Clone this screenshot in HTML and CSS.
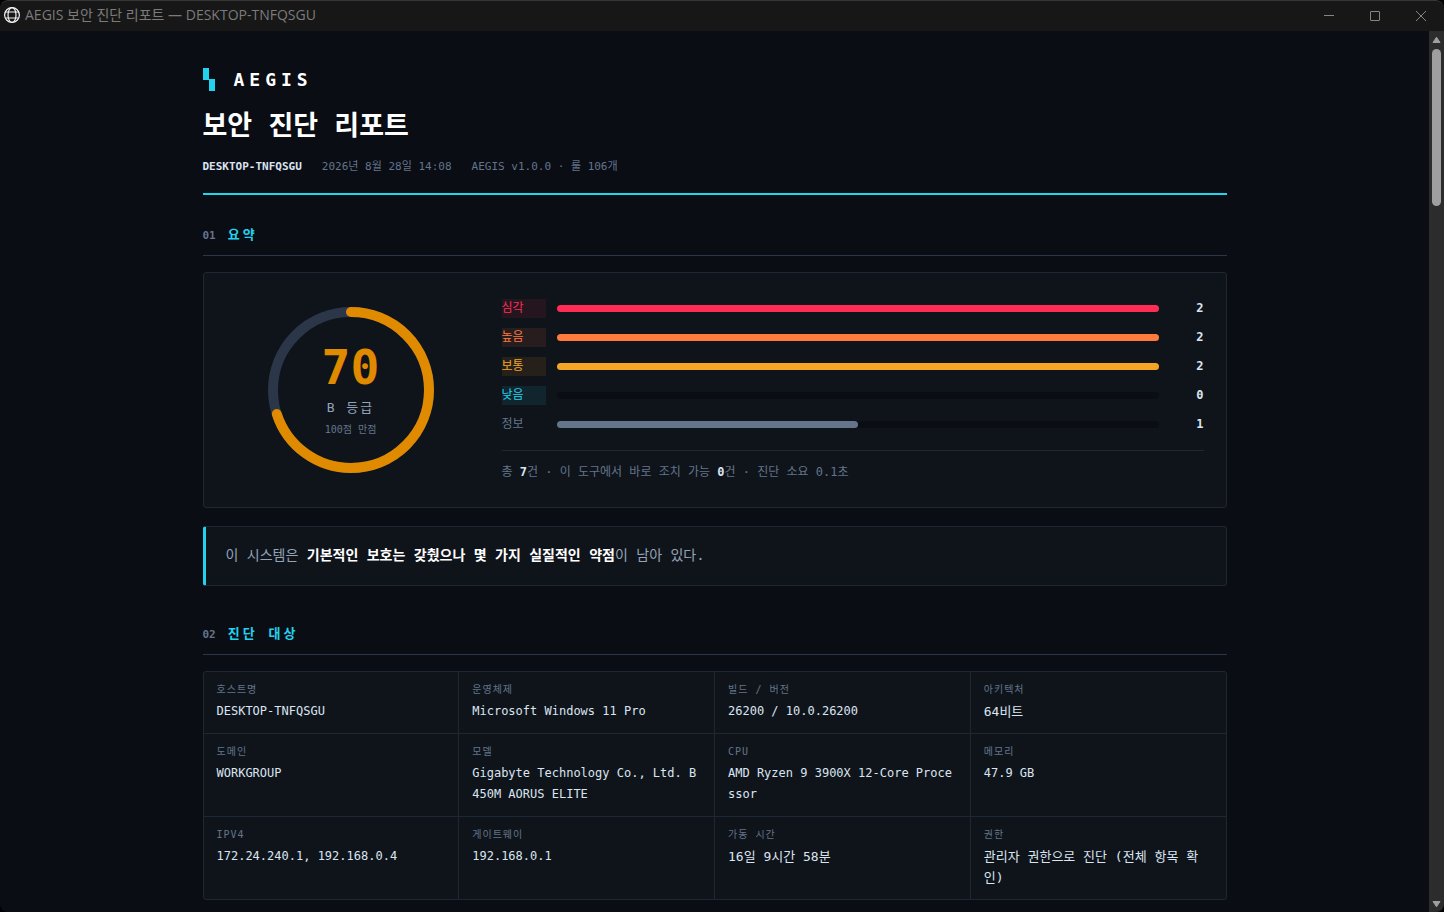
FILE: index.html
```html
<!DOCTYPE html>
<html lang="ko">
<head>
  <meta charset="UTF-8">
  <title>AEGIS 보안 진단 리포트 — DESKTOP-TNFQSGU</title>
  <link rel="stylesheet" href="styles.css">
</head>
<body>

  <div class="window">
    <div class="titlebar">
      <svg class="globe" width="18" height="18" viewBox="0 0 18 18" fill="none" stroke="#f2f2f2" stroke-width="1.2">
        <circle cx="9" cy="9" r="7.4"/>
        <ellipse cx="9" cy="9" rx="4" ry="7.4"/>
        <path d="M2.4 6h13.2M2.4 12h13.2" stroke-width="1.1"/>
      </svg>
      <span class="titlebar-text">AEGIS 보안 진단 리포트 — DESKTOP-TNFQSGU</span>
      <button class="win-btn" aria-label="최소화"><svg width="10" height="10" viewBox="0 0 10 10"><path d="M0 4.5h10"/></svg></button>
      <button class="win-btn" aria-label="최대화"><svg width="10" height="10" viewBox="0 0 10 10"><rect x="0.5" y="0.5" width="9" height="9" rx="0.5"/></svg></button>
      <button class="win-btn" aria-label="닫기"><svg width="10" height="10" viewBox="0 0 10 10"><path d="M0 0l10 10M10 0L0 10"/></svg></button>
    </div>

    <div class="view">
      <main class="page">
        <header class="head">
          <div class="brand">
            <svg width="12" height="24" viewBox="0 0 12 24"><path d="M0 0h6v11h6v12H6V12H0z" fill="#22d3ee"/></svg>
            <span>AEGIS</span>
          </div>
          <h1>보안 진단 리포트</h1>
          <div class="meta">
            <b>DESKTOP-TNFQSGU</b>
            <span>2026년 8월 28일 14:08</span>
            <span>AEGIS v1.0.0 · 룰 106개</span>
          </div>
        </header>

        <section>
          <h2><span class="num">01</span>요약</h2>
          <div class="card summary">
            <div class="gauge">
              <svg width="190" height="190" viewBox="0 0 190 190" fill="none" stroke-width="10">
                <circle cx="95" cy="95" r="78" stroke="#2b3648"/>
                <circle cx="95" cy="95" r="78" stroke="#e08a00" stroke-linecap="round" pathLength="100" stroke-dasharray="70 100" transform="rotate(-90 95 95)"/>
              </svg>
              <div class="gauge-text">
                <div class="score">70</div>
                <div class="grade">B 등급</div>
                <div class="max">100점 만점</div>
              </div>
            </div>
            <div class="levels">
              <div class="level crit"><span class="tag">심각</span><div class="track"><div class="fill" style="width: 100%"></div></div><span class="count">2</span></div>
              <div class="level high"><span class="tag">높음</span><div class="track"><div class="fill" style="width: 100%"></div></div><span class="count">2</span></div>
              <div class="level mid"><span class="tag">보통</span><div class="track"><div class="fill" style="width: 100%"></div></div><span class="count">2</span></div>
              <div class="level low"><span class="tag">낮음</span><div class="track"><div class="fill" style="width: 0%"></div></div><span class="count">0</span></div>
              <div class="level info"><span class="tag">정보</span><div class="track"><div class="fill" style="width: 50%"></div></div><span class="count">1</span></div>
              <p class="total">총 <b>7</b>건 · 이 도구에서 바로 조치 가능 <b>0</b>건 · 진단 소요 0.1초</p>
            </div>
          </div>
          <p class="card verdict">이 시스템은 <b>기본적인 보호는 갖췄으나 몇 가지 실질적인 약점</b>이 남아 있다.</p>
        </section>

        <section>
          <h2><span class="num">02</span>진단 대상</h2>
          <dl class="facts">
            <div><dt>호스트명</dt><dd>DESKTOP-TNFQSGU</dd></div>
            <div><dt>운영체제</dt><dd>Microsoft Windows 11 Pro</dd></div>
            <div><dt>빌드 / 버전</dt><dd>26200 / 10.0.26200</dd></div>
            <div><dt>아키텍처</dt><dd class="ko">64비트</dd></div>
            <div><dt>도메인</dt><dd>WORKGROUP</dd></div>
            <div><dt>모델</dt><dd>Gigabyte Technology Co., Ltd. B450M AORUS ELITE</dd></div>
            <div><dt>CPU</dt><dd>AMD Ryzen 9 3900X 12-Core Processor</dd></div>
            <div><dt>메모리</dt><dd>47.9 GB</dd></div>
            <div><dt>IPV4</dt><dd>172.24.240.1, 192.168.0.4</dd></div>
            <div><dt>게이트웨이</dt><dd>192.168.0.1</dd></div>
            <div><dt>가동 시간</dt><dd class="ko">16일 9시간 58분</dd></div>
            <div><dt>권한</dt><dd class="ko">관리자 권한으로 진단 (전체 항목 확인)</dd></div>
          </dl>
        </section>
      </main>

      <div class="scrollbar">
        <svg width="9" height="8" viewBox="0 0 9 8"><path d="M4.5 1.2L8 6.5H1z"/></svg>
        <div class="thumb"></div>
        <svg class="down" width="9" height="8" viewBox="0 0 9 8"><path d="M4.5 6.8L8 1.5H1z"/></svg>
      </div>
    </div>
  </div>

</body>
</html>
```
FILE: styles.css
```css
* {
  box-sizing: border-box;
}
body {
  margin: 0;
  background: #000;
  color: #94a3b8;
  font-family: "DejaVu Sans Mono", "Noto Sans CJK KR", monospace;
  font-size: 12px;
}
h1, h2, p, dl, dd {
  margin: 0;
}

/* window */
.window {
  display: flex;
  flex-direction: column;
  height: 100vh;
  overflow: hidden;
  border-radius: 8px;
  background: #0a0d14;
}
.titlebar {
  display: flex;
  align-items: center;
  flex: none;
  height: 31px;
  padding-left: 3px;
  border-top: 1px solid #363636;
  border-radius: 8px 8px 0 0;
  background: #171717;
}
.titlebar-text {
  flex: 1;
  margin-left: 4px;
  padding-bottom: 2px;
  color: #7b7b7b;
  font-family: "Open Sans", "Noto Sans CJK KR", sans-serif;
  font-size: 14px;
  line-height: 20px;
}
.globe {
  margin-bottom: 2px;
}
.win-btn {
  display: flex;
  align-items: center;
  justify-content: center;
  width: 46px;
  height: 30px;
  padding: 0;
  border: 0;
  background: none;
}
.win-btn path,
.win-btn rect {
  fill: none;
  stroke: #858585;
}
.view {
  display: flex;
  flex: 1;
  min-height: 0;
}
.scrollbar {
  display: flex;
  flex-direction: column;
  align-items: center;
  width: 15px;
  padding: 5px 0 4px;
  background: #2c2c2c;
}
.scrollbar path {
  fill: #9f9f9f;
  stroke: #9f9f9f;
  stroke-linejoin: round;
}
.thumb {
  width: 9px;
  height: 18%;
  margin-top: 5px;
  border-radius: 5px;
  background: #9f9f9f;
}
.down {
  margin-top: auto;
}

/* report */
.page {
  flex: 1;
  overflow: hidden;
  padding: 33px 28px 0;
}
.head,
section {
  max-width: 1024px;
  margin: 0 auto;
}
.head {
  padding-bottom: 17px;
  border-bottom: 2px solid #22d3ee;
}
.brand {
  display: flex;
  align-items: center;
  gap: 19px;
  color: #fff;
  font-size: 18px;
  font-weight: bold;
  letter-spacing: 5px;
  line-height: 32px;
}
h1 {
  margin-top: 10px;
  color: #fff;
  font-size: 27px;
  line-height: 40px;
}
.meta {
  display: flex;
  gap: 20px;
  margin-top: 12px;
  color: #64748b;
  font-size: 11px;
  line-height: 18px;
}
.meta b,
.total b {
  color: #dbe4f0;
}
section {
  margin-top: 30px;
}
section + section {
  margin-top: 38px;
}
h2 {
  display: flex;
  align-items: baseline;
  gap: 12px;
  margin-bottom: 16px;
  padding-bottom: 9px;
  border-bottom: 1px solid #2b3648;
  color: #22d3ee;
  font-size: 13px;
  letter-spacing: 3px;
  line-height: 20px;
}
.num {
  color: #64748b;
  font-size: 11px;
  letter-spacing: 0;
}
.card {
  border: 1px solid #1e2734;
  border-radius: 3px;
  background: #0f141b;
}
.summary {
  display: grid;
  grid-template-columns: 250px 1fr;
  gap: 26px;
  align-items: center;
  padding: 22px;
}
.gauge {
  display: flex;
  justify-content: center;
  position: relative;
}
.gauge-text {
  position: absolute;
  inset: 0;
  display: flex;
  flex-direction: column;
  align-items: center;
  justify-content: center;
  padding-top: 2px;
}
.score {
  color: #e08a00;
  font-size: 48px;
  font-weight: bold;
  line-height: 48px;
}
.grade {
  margin-top: 6px;
  font-size: 13px;
  letter-spacing: 2px;
  line-height: 22px;
}
.max {
  margin-top: 2px;
  color: #64748b;
  font-size: 10px;
  line-height: 18px;
}
.level {
  display: grid;
  grid-template-columns: 44px 1fr 34px;
  gap: 11px;
  align-items: center;
  margin-bottom: 10px;
  line-height: 19px;
}
.track {
  height: 7px;
  border-radius: 4px;
  background: #0a0d14;
}
.fill {
  height: 100%;
  border-radius: 4px;
}
.count {
  color: #dbe4f0;
  font-weight: bold;
  text-align: right;
}
.crit .tag { color: #ff2d55; background: #25151f; }
.crit .fill { background: #ff2d55; }
.high .tag { color: #ff7a3d; background: #271c1e; }
.high .fill { background: #ff7a3d; }
.mid .tag { color: #f5a524; background: #26201b; }
.mid .fill { background: #f5a524; }
.low .tag { color: #22d3ee; background: #10252d; }
.low .fill { background: #22d3ee; }
.info .tag { color: #64748b; }
.info .fill { background: #64748b; }
.total {
  margin-top: 16px;
  padding-top: 12px;
  border-top: 1px solid #1e2734;
  color: #64748b;
  line-height: 19px;
}
.verdict {
  margin-top: 18px;
  padding: 16px 20px 18px;
  border-left: 3px solid #22d3ee;
  font-size: 14px;
  line-height: 24px;
}
.verdict b {
  color: #fff;
}

/* target facts */
.facts {
  display: grid;
  grid-template-columns: repeat(4, 1fr);
  gap: 1px;
  overflow: hidden;
  border: 1px solid #1e2734;
  border-radius: 3px;
  background: #1e2734;
}
.facts div {
  padding: 10px 13px 11px;
  background: #0f141b;
}
dt {
  margin-bottom: 4px;
  color: #64748b;
  font-size: 10px;
  letter-spacing: 1px;
  line-height: 15px;
}
dd {
  color: #dbe4f0;
  line-height: 21px;
  word-break: break-all;
}
.ko {
  font-size: 13px;
}
```
